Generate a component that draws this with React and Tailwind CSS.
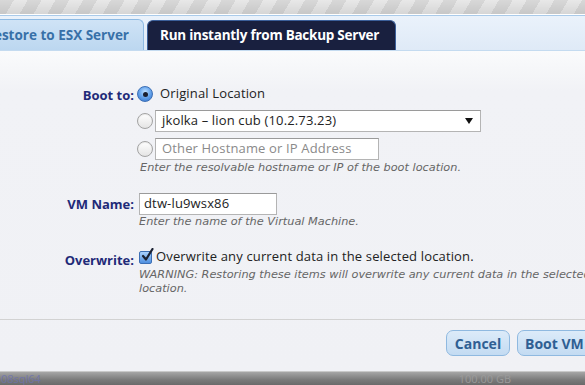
import React from "react";

function Radio({ checked }) {
  return (
    <div
      className={
        "w-[16px] h-[16px] rounded-full border flex items-center justify-center shrink-0 " +
        (checked
          ? "border-[#3c6fb5] bg-[radial-gradient(circle_at_50%_35%,#bfe0ff_0%,#6aa8ee_45%,#2f6fc9_100%)]"
          : "border-[#a3a3a3] bg-[linear-gradient(#ffffff,#e4e4e4)] shadow-[inset_0_1px_1px_rgba(0,0,0,0.08)]")
      }
    >
      {checked && <div className="w-[5px] h-[5px] rounded-full bg-[#1a1f2e]" />}
    </div>
  );
}

function Checkbox() {
  return (
    <div className="relative w-[13px] h-[13px] shrink-0 rounded-[2px] border border-[#3c6fb5] bg-[linear-gradient(#a9d2ff,#4f8fdf)]">
      <svg
        className="absolute left-[1px] top-[-4px]"
        width="13"
        height="14"
        viewBox="0 0 13 14"
      >
        <path
          d="M2 8 L5 11.5 L11.5 1"
          fill="none"
          stroke="#1b2233"
          strokeWidth="2.2"
          strokeLinecap="round"
          strokeLinejoin="round"
        />
      </svg>
    </div>
  );
}

const hint =
  "text-[11.3px] leading-[14px] italic text-[#666] whitespace-nowrap font-['DejaVu_Sans','Open_Sans',sans-serif]";

const label =
  "w-[137px] shrink-0 pr-[3px] text-right font-bold text-[#1f2a78]";

export default function App() {
  const font = "font-['Open_Sans','Liberation_Sans',sans-serif]";
  return (
    <div className={"w-[585px] h-[385px] overflow-hidden flex flex-col " + font}>
      {/* striped background top */}
      <div className="h-[14px] shrink-0 bg-[linear-gradient(rgba(0,0,0,0)_0%,rgba(0,0,0,0.08)_100%),repeating-linear-gradient(120deg,#d8d8d8_0px,#d8d8d8_12px,#e8e8e8_12px,#e8e8e8_24px)]" />
      {/* tab strip */}
      <div className="h-[37px] shrink-0 flex items-end bg-[linear-gradient(#ffffff_0px,#ffffff_1px,#aacbea_1px,#aacbea_2px,#eaf2fb_2px,#dfeaf7_100%)] border-b border-[#c4dbf0]">
        <div className="ml-[-14px] w-[158px] shrink-0 h-[31px] rounded-tr-[6px] border-t border-r border-[#8ebae3] bg-[linear-gradient(#cfe3f6,#bcd7f0)] flex items-center justify-end pr-[14px]">
          <span className="text-[13.5px] font-bold text-[#3870a8] whitespace-nowrap">
            Restore to ESX Server
          </span>
        </div>
        <div className="ml-[3px] w-[249px] shrink-0 h-[30px] rounded-t-[6px] bg-[#19203f] border-t border-x border-[#3b5f9a] flex items-center pl-[12px]">
          <span className="text-[13.5px] font-bold text-white whitespace-nowrap tracking-[-0.25px]">
            Run instantly from Backup Server
          </span>
        </div>
      </div>
      {/* content */}
      <div className="flex-1 flex flex-col bg-[linear-gradient(#fafbfc_0px,#f1f2f6_40px,#f0f1f5_100%)] text-[13px] text-[#222]">
        <div className="pt-[35px]">
          {/* Boot to */}
          <div className="flex">
            <div className={label + " leading-[20px] mt-[-1px]"}>Boot to:</div>
            <div className="flex flex-col">
              <div className="h-[16px] flex items-center">
                <Radio checked />
                <span className="ml-[7px] leading-[16px] mt-[-2px] tracking-[0.15px]">Original Location</span>
              </div>
              <div className="mt-[8px] flex items-center">
                <Radio />
                <div className="ml-[2px] w-[326px] h-[22px] bg-white border border-[#b4b4b4] border-t-[#9a9a9a] flex items-center justify-between pl-[6px] pr-[7px]">
                  <span className="whitespace-nowrap tracking-[0.15px]">jkolka – lion cub (10.2.73.23)</span>
                  <svg width="8" height="6" viewBox="0 0 8 6">
                    <path d="M0 0 L8 0 L4 6 Z" fill="#111" />
                  </svg>
                </div>
              </div>
              <div className="mt-[6px] flex items-center">
                <Radio />
                <div className="ml-[2px] w-[224px] h-[22px] bg-white border border-[#b4b4b4] border-t-[#9a9a9a] flex items-center pl-[6px]">
                  <span className="whitespace-nowrap text-[#8a8a8a] tracking-[0.15px]">Other Hostname or IP Address</span>
                </div>
              </div>
              <div className={"ml-[3px] mt-[1px] " + hint}>
                Enter the resolvable hostname or IP of the boot location.
              </div>
            </div>
          </div>
          {/* VM Name */}
          <div className="flex mt-[18px]">
            <div className={label + " leading-[22px]"}>VM Name:</div>
            <div className="flex flex-col ml-[2px]">
              <div className="w-[138px] h-[22px] bg-white border border-[#b4b4b4] border-t-[#9a9a9a] flex items-center pl-[4px]">
                <span className="whitespace-nowrap tracking-[0.15px]">dtw-lu9wsx86</span>
              </div>
              <div className={hint}>Enter the name of the Virtual Machine.</div>
            </div>
          </div>
          {/* Overwrite */}
          <div className="flex mt-[20px]">
            <div className={label + " leading-[20px] mt-[1px]"}>Overwrite:</div>
            <div className="flex flex-col ml-[2px] shrink-0">
              <div className="flex items-center h-[16px]">
                <Checkbox />
                <span className="ml-[4px] whitespace-nowrap tracking-[0.15px]">
                  Overwrite any current data in the selected location.
                </span>
              </div>
              <div className={"mt-[3px] " + hint}>
                WARNING: Restoring these items will overwrite any current data in the selected
                <br />
                location.
              </div>
            </div>
          </div>
        </div>
        {/* separator + buttons */}
        <div className="mt-auto border-t border-[#d2d2d2] pt-[10px] pb-[15px] pl-[446px] flex gap-[7px]">
          <div className="w-[64px] h-[26px] shrink-0 rounded-[7px] border border-[#8fb9e0] bg-[linear-gradient(#dcebf9,#c3dbf2)] flex items-center justify-center">
            <span className="text-[14px] font-bold text-[#2f5f93]">Cancel</span>
          </div>
          <div className="w-[80px] h-[26px] shrink-0 rounded-[7px] border border-[#8fb9e0] bg-[linear-gradient(#dcebf9,#c3dbf2)] flex items-center pl-[7px]">
            <span className="text-[14px] font-bold text-[#2f5f93] whitespace-nowrap">Boot VM</span>
          </div>
        </div>
      </div>
      {/* bottom shadow bar */}
      <div className="h-[14px] shrink-0 border-t border-[#c9c9c9] bg-[linear-gradient(#a6a6a6,#7a7a7a_60%,#6a6a6a)] flex items-center justify-between text-[11px] leading-[13px]">
        <span className="text-[#6d72b0] opacity-80 ml-[1px]">08sql64</span>
        <span className="text-[#9a9a9a] mr-[74px]">100.00 GB</span>
      </div>
    </div>
  );
}
